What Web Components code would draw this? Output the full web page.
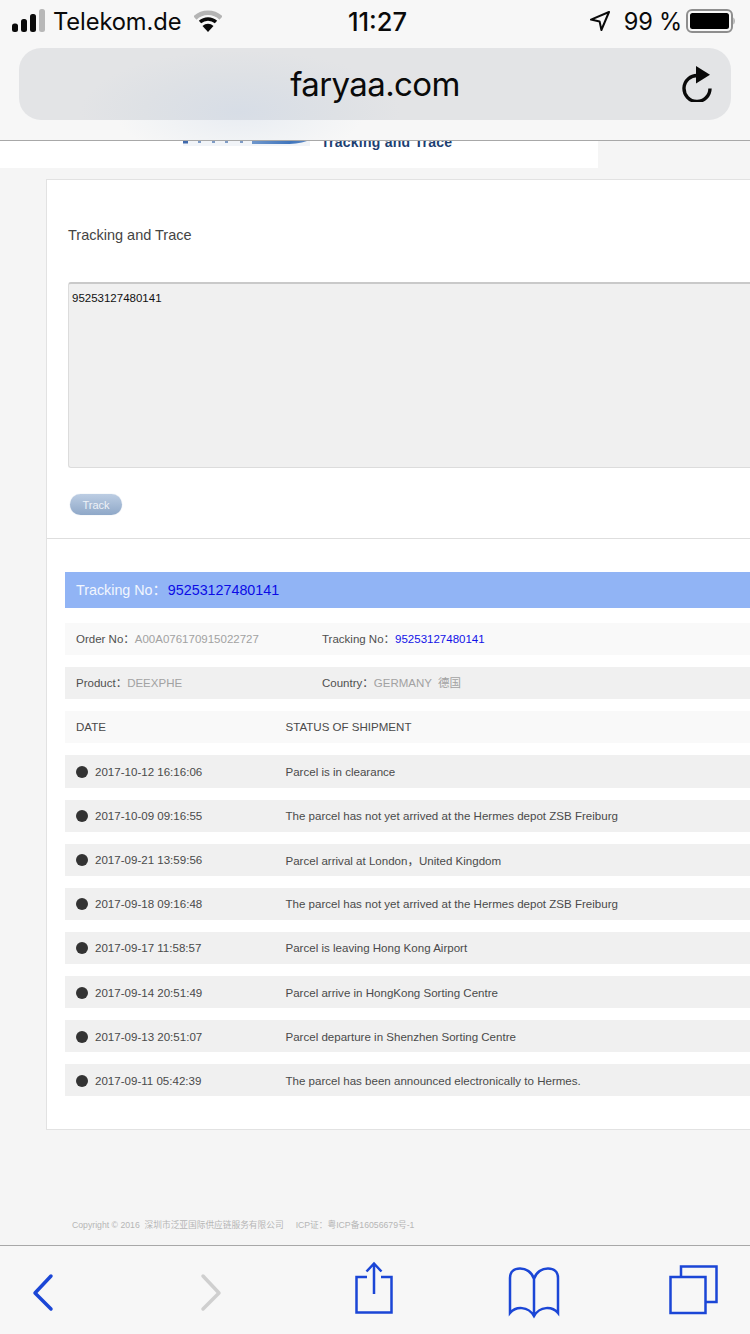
<!DOCTYPE html>
<html lang="en">
<head>
<meta charset="utf-8">
<title>faryaa.com</title>
<style>
html, body { margin: 0; padding: 0; }
body { background: #f5f5f5; font-family: "Liberation Sans", "Noto Sans CJK SC", sans-serif; }
#page { display: flex; flex-direction: column; height: 1334px; overflow: hidden; }
info-row i { font-style: normal; color: #a2a2a2; }
info-row b { font-weight: normal; color: #1212e8; }
</style>
</head>
<body>
<div id="page">
  <safari-top host="faryaa.com" carrier="Telekom.de" time="11:27" battery="99 %"></safari-top>
  <logo-strip>Tracking and Trace</logo-strip>
  <track-card>
    <track-form number="95253127480141" title="Tracking and Trace"></track-form>
    <track-result number="95253127480141">
      <info-row tone="light"><span slot="a">Order No：<i>A00A076170915022727</i></span><span slot="b">Tracking No：<b>95253127480141</b></span></info-row>
      <info-row tone="dark"><span slot="a">Product：<i>DEEXPHE</i></span><span slot="b">Country：<i>GERMANY &nbsp;德国</i></span></info-row>
      <event-row tone="light" head date="DATE">STATUS OF SHIPMENT</event-row>
      <event-row date="2017-10-12 16:16:06">Parcel is in clearance</event-row>
      <event-row date="2017-10-09 09:16:55">The parcel has not yet arrived at the Hermes depot ZSB Freiburg</event-row>
      <event-row date="2017-09-21 13:59:56">Parcel arrival at London，United Kingdom</event-row>
      <event-row date="2017-09-18 09:16:48">The parcel has not yet arrived at the Hermes depot ZSB Freiburg</event-row>
      <event-row date="2017-09-17 11:58:57">Parcel is leaving Hong Kong Airport</event-row>
      <event-row date="2017-09-14 20:51:49">Parcel arrive in HongKong Sorting Centre</event-row>
      <event-row date="2017-09-13 20:51:07">Parcel departure in Shenzhen Sorting Centre</event-row>
      <event-row date="2017-09-11 05:42:39">The parcel has been announced electronically to Hermes.</event-row>
    </track-result>
  </track-card>
  <page-footer>Copyright © 2016 &nbsp;深圳市泛亚国际供应链服务有限公司 &nbsp; &nbsp; ICP证：粤ICP备16056679号-1</page-footer>
  <safari-toolbar></safari-toolbar>
</div>

<script>
class SafariTop extends HTMLElement {
    constructor() {
        super();
        this.shadowDOM = this.attachShadow({mode: "open"});
    }

    connectedCallback() {
        this.shadowDOM.innerHTML = `
        <style>
        :host {
            display: block;
            flex: none;
            height: 140px;
            background: radial-gradient(ellipse 125px 50px at 240px 112px, #e8ecf2 0%, #f1f3f5 60%, #f7f7f7 100%);
            border-bottom: 1px solid #a8a8a8;
            font-family: Inter, "Liberation Sans", sans-serif;
            color: #0a0a0a;
        }
        .status {
            display: grid;
            grid-template-columns: 1fr auto 1fr;
            align-items: center;
            height: 42px;
            padding: 0 15px 0 12px;
            background: #f7f7f7;
        }
        .left, .right { display: flex; align-items: center; }
        .right { justify-content: flex-end; }
        .carrier { font-size: 23.7px; margin-left: 8px; letter-spacing: -0.1px; }
        .wifi { margin-left: 13px; }
        .time { font-size: 25.5px; font-weight: 500; margin-left: 8px; }
        .pct { font-size: 23.6px; margin-left: 14px; letter-spacing: -0.2px; }
        .batt { margin-left: 4px; }
        .bar {
            display: flex;
            align-items: center;
            justify-content: center;
            position: relative;
            height: 72px;
            margin: 6px 19px 0;
            border-radius: 22px;
            background: radial-gradient(ellipse 160px 62px at 221px 64px, #d7dde6 0%, #dee1e5 60%, #e3e4e6 100%);
            font-size: 33px;
            letter-spacing: -0.6px;
        }
        .reload { position: absolute; right: 18px; top: 18px; }
        </style>
        <div class="status">
            <div class="left">
                <svg width="33" height="30" viewBox="0 0 33 30">
                    <rect x="0" y="17.5" width="6" height="8.5" rx="2.5" fill="#0a0a0a"/>
                    <rect x="9" y="13" width="6" height="13" rx="2.5" fill="#0a0a0a"/>
                    <rect x="18" y="8" width="6" height="18" rx="2.5" fill="#0a0a0a"/>
                    <rect x="27" y="3" width="6" height="23" rx="2.5" fill="#b8b8b8"/>
                </svg>
                <span class="carrier">${this.getAttribute("carrier")}</span>
                <svg class="wifi" width="28" height="22" viewBox="0 0 28 22">
                    <path d="M1 8 A19 19 0 0 1 27 8" fill="none" stroke="#b4b4b4" stroke-width="4.5"/>
                    <path d="M6 12 A12 12 0 0 1 22 12" fill="none" stroke="#0a0a0a" stroke-width="3.5"/>
                    <path d="M14 22 L8.5 16 A8 8 0 0 1 19.5 16 Z" fill="#0a0a0a"/>
                </svg>
            </div>
            <span class="time">${this.getAttribute("time")}</span>
            <div class="right">
                <svg width="20" height="20" viewBox="0 0 20 20">
                    <path d="M19 1 L1 8.6 L9.6 10.4 L11.4 19 Z" fill="none" stroke="#0a0a0a" stroke-width="2" stroke-linejoin="round"/>
                </svg>
                <span class="pct">${this.getAttribute("battery")}</span>
                <svg class="batt" width="49" height="24" viewBox="0 0 49 24">
                    <rect x="1" y="1" width="45" height="22" rx="5" fill="none" stroke="#8e8e8e" stroke-width="2"/>
                    <rect x="4" y="4" width="39" height="16" rx="2.5" fill="#000"/>
                    <path d="M47.5 8.5 C49 9.5 49 14.5 47.5 15.5 Z" fill="#8e8e8e"/>
                </svg>
            </div>
        </div>
        <div class="bar">
            <span>${this.getAttribute("host")}</span>
            <svg class="reload" width="32" height="36" viewBox="0 0 32 36">
                <path d="M17 9.5 A13 13 0 1 0 29 22.5" fill="none" stroke="#0a0a0a" stroke-width="3.4"/>
                <path d="M15 0 L29 8.8 L15 17.5 Z" fill="#0a0a0a"/>
            </svg>
        </div>
        `;
    }
}
customElements.define("safari-top", SafariTop);

class LogoStrip extends HTMLElement {
    constructor() {
        super();
        this.shadowDOM = this.attachShadow({mode: "open"});
        this.shadowDOM.innerHTML = `
        <style>
        :host {
            display: flex;
            flex: none;
            width: 598px;
            height: 27px;
            background: #fff;
            overflow: hidden;
            box-sizing: border-box;
            padding-left: 183px;
        }
        .mark { flex: none; width: 127px; margin-right: 11px; }
        .name {
            margin-top: -7px;
            font: bold 14px/16px "Liberation Sans", sans-serif;
            letter-spacing: 0.25px;
            color: #1d3f72;
            white-space: nowrap;
        }
        </style>
        <svg class="mark" width="127" height="6" viewBox="0 0 127 6">
            <defs>
                <linearGradient id="fade" x1="0" x2="1" y1="0" y2="0">
                    <stop offset="0" stop-color="#6f97cc"/>
                    <stop offset="0.7" stop-color="#3f75bd"/>
                    <stop offset="1" stop-color="#5f8ac4"/>
                </linearGradient>
            </defs>
            <rect width="127" height="5" fill="#f1f4f8"/>
            <path d="M0 0 H5 V2.500 H0 Z" fill="#3f69ac"/>
            <path d="M15 0 H18 V2 H15 Z M29 0 H32 V2 H29 Z M42 0 H45 V2 H42 Z M57 0 H60 V2 H57 Z" fill="#7f9cc6"/>
            <path d="M69 0 H124 C118 2.500 108 3 100 3 H69 Z" fill="url(#fade)"/>
        </svg>
        <span class="name"><slot></slot></span>
        `;
    }
}
customElements.define("logo-strip", LogoStrip);

class TrackCard extends HTMLElement {
    constructor() {
        super();
        this.shadowDOM = this.attachShadow({mode: "open"});
        this.shadowDOM.innerHTML = `
        <style>
        :host {
            display: block;
            flex: none;
            margin: 11px 0 0 46px;
            background: #fff;
            border: 1px solid #e2e2e2;
            border-right: 0;
        }
        </style>
        <slot></slot>
        `;
    }
}
customElements.define("track-card", TrackCard);

class TrackForm extends HTMLElement {
    constructor() {
        super();
        this.shadowDOM = this.attachShadow({mode: "open"});
    }

    connectedCallback() {
        this.shadowDOM.innerHTML = `
        <style>
        :host {
            display: block;
            height: 358px;
            box-sizing: content-box;
            padding-left: 21px;
            border-bottom: 1px solid #dedede;
            font-family: "Liberation Sans", sans-serif;
        }
        h2 {
            margin: 0;
            padding-top: 46px;
            font-size: 14.5px;
            line-height: 18px;
            font-weight: normal;
            color: #444;
        }
        .area {
            box-sizing: border-box;
            height: 186px;
            margin-top: 38px;
            padding: 7px 3px;
            background: #f0f0f0;
            border: 1px solid #dcdcdc;
            border-top: 2px solid #c9c9c9;
            border-right: 0;
            border-radius: 3px 0 0 3px;
            font-size: 11.5px;
            line-height: 14px;
            color: #111;
        }
        .btn {
            box-sizing: border-box;
            width: 52px;
            height: 21px;
            margin: 26px 0 0 2px;
            border-radius: 11px;
            background: linear-gradient(#bccde3, #8fa8c8);
            box-shadow: 0 0 1px #b9c6d8;
            color: #eef2f7;
            font-size: 11px;
            line-height: 22px;
            text-align: center;
        }
        </style>
        <h2>${this.getAttribute("title")}</h2>
        <div class="area">${this.getAttribute("number")}</div>
        <div class="btn">Track</div>
        `;
    }
}
customElements.define("track-form", TrackForm);

class TrackResult extends HTMLElement {
    constructor() {
        super();
        this.shadowDOM = this.attachShadow({mode: "open"});
    }

    connectedCallback() {
        this.shadowDOM.innerHTML = `
        <style>
        :host {
            display: block;
            padding: 33px 0 33px 18px;
            font-family: "Liberation Sans", "Noto Sans CJK SC", sans-serif;
        }
        .banner {
            height: 36px;
            padding-left: 11px;
            background: #91b4f5;
            color: #f2f6fe;
            font-size: 14.3px;
            line-height: 37px;
        }
        .banner b { font-weight: normal; color: #0c0ce6; margin-left: 1px; }
        .rows {
            display: flex;
            flex-direction: column;
            gap: 12px;
            margin-top: 15px;
        }
        </style>
        <div class="banner">Tracking No：<b>${this.getAttribute("number")}</b></div>
        <div class="rows"><slot></slot></div>
        `;
    }
}
customElements.define("track-result", TrackResult);

class InfoRow extends HTMLElement {
    constructor() {
        super();
        this.shadowDOM = this.attachShadow({mode: "open"});
    }

    connectedCallback() {
        const bg = this.getAttribute("tone") == "light" ? "#f9f9f9" : "#f0f0f0";
        this.shadowDOM.innerHTML = `
        <style>
        :host {
            display: grid;
            grid-template-columns: 246px 1fr;
            align-items: center;
            box-sizing: border-box;
            height: 32.14px;
            padding: 0 0 2px 11px;
            background: ${bg};
            color: #4f4f4f;
            font-size: 11.5px;
        }
        ::slotted(span) { white-space: nowrap; }
        </style>
        <slot name="a"></slot>
        <slot name="b"></slot>
        `;
    }
}
customElements.define("info-row", InfoRow);

class EventRow extends HTMLElement {
    constructor() {
        super();
        this.shadowDOM = this.attachShadow({mode: "open"});
    }

    connectedCallback() {
        const head = this.hasAttribute("head");
        const bg = this.getAttribute("tone") == "light" ? "#f9f9f9" : "#f0f0f0";
        const dot = head ? "" : `<i class="dot"></i>`;
        this.shadowDOM.innerHTML = `
        <style>
        :host {
            display: grid;
            grid-template-columns: 209.5px 1fr;
            align-items: center;
            box-sizing: border-box;
            height: 32.14px;
            padding: ${head ? 0 : 1}px 0 0 11px;
            background: ${bg};
            color: #4a4a4a;
            font-size: 11.55px;
        }
        .date { display: flex; align-items: center; gap: 7px; white-space: nowrap; }
        .dot { width: 12px; height: 12px; border-radius: 50%; background: #333; }
        </style>
        <div class="date">${dot}<span>${this.getAttribute("date")}</span></div>
        <div><slot></slot></div>
        `;
    }
}
customElements.define("event-row", EventRow);

class PageFooter extends HTMLElement {
    constructor() {
        super();
        this.shadowDOM = this.attachShadow({mode: "open"});
        this.shadowDOM.innerHTML = `
        <style>
        :host {
            display: flex;
            flex: 1;
            align-items: flex-end;
            padding: 0 0 14px 72px;
            color: #b6b6b6;
            font-size: 8.7px;
            line-height: 12px;
            white-space: nowrap;
        }
        </style>
        <span><slot></slot></span>
        `;
    }
}
customElements.define("page-footer", PageFooter);

class SafariToolbar extends HTMLElement {
    constructor() {
        super();
        this.shadowDOM = this.attachShadow({mode: "open"});
        this.shadowDOM.innerHTML = `
        <style>
        :host {
            display: block;
            flex: none;
            height: 88px;
            background: #f7f7f7;
            border-top: 1px solid #a8a8a8;
        }
        svg { display: block; }
        </style>
        <svg width="750" height="88" viewBox="0 0 750 88" fill="none" stroke="#1b46d6" stroke-width="2.500">
            <path d="M51 30 L35 47 L51 63" stroke-width="3.500" stroke-linecap="round" stroke-linejoin="round"/>
            <path d="M203 30 L219 47 L203 63" stroke="#cfcfcf" stroke-width="3.500" stroke-linecap="round" stroke-linejoin="round"/>
            <path d="M367 31 H356.500 V66.500 H391.500 V31 H381"/>
            <path d="M374 48 V17.500 M366.500 25.500 L374 17.500 L381.500 25.500"/>
            <path d="M534 33 C532 26 526 22.500 520 22.500 C514 22.500 510 26 510 32 V67 C516 60 528 60 534 70 C540 60 552 60 558 67 V32 C558 26 554 22.500 548 22.500 C542 22.500 536 26 534 33 Z M534 33 V70"/>
            <rect x="670.500" y="31" width="35" height="36"/>
            <path d="M681 31 V20.500 H716.500 V56 H706"/>
        </svg>
        `;
    }
}
customElements.define("safari-toolbar", SafariToolbar);
</script>
</body>
</html>
